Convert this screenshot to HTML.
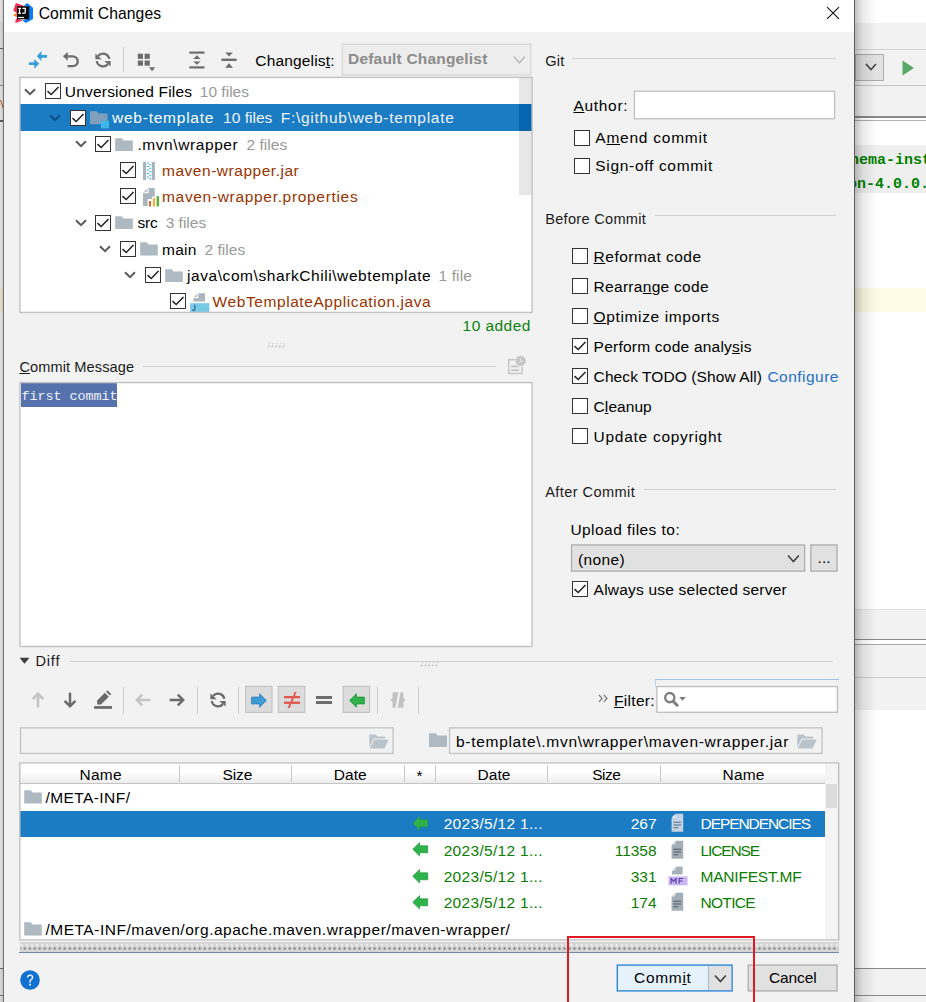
<!DOCTYPE html>
<html><head><meta charset="utf-8"><title>Commit Changes</title>
<style>
html,body{margin:0;padding:0;}
body{width:926px;height:1002px;overflow:hidden;position:relative;background:#fff;font-family:"Liberation Sans", sans-serif;font-size:16px;}
#root{position:absolute;left:0;top:0;width:926px;height:1002px;overflow:hidden;}
#root div, #root svg{position:absolute;}
u{text-decoration:underline;text-underline-offset:0.7px;text-decoration-thickness:1.3px;}
</style></head><body><div id="root">
<div style="left:855px;top:0px;width:71px;height:1002px;background:#ffffff;"></div>
<div style="left:855px;top:23px;width:71px;height:98px;background:#f2f2f2;"></div>
<div style="left:855px;top:49px;width:71px;height:1px;background:#d4d4d4;"></div>
<div style="left:855px;top:54px;width:29px;height:27px;background:#e1e1e1;border:1px solid #adadad;box-sizing:border-box;"></div>
<svg style="left:864px;top:61px" width="14" height="12" viewBox="0 0 14 12"><path d="M2 3 L7 8.5 L12 3" fill="none" stroke="#444" stroke-width="1.6"/></svg>
<svg style="left:902px;top:60px" width="13" height="16" viewBox="0 0 13 16"><path d="M0.5 0.5 L12 8 L0.5 15.5 Z" fill="#59a869"/></svg>
<div style="left:855px;top:85px;width:71px;height:1px;background:#c4c4c4;"></div>
<div style="left:855px;top:115.5px;width:71px;height:2px;background:#8a8a8a;"></div>
<div style="left:855px;top:117.5px;width:71px;height:2.5px;background:#ffffff;"></div>
<div style="left:855px;top:120px;width:71px;height:1px;background:#b0b0b0;"></div>
<div style="left:855px;top:121px;width:71px;height:24px;background:#ffffff;"></div>
<div style="left:855px;top:145px;width:71px;height:47.5px;background:#efefef;"></div>
<div style="left:850px;top:150.90px;height:20px;line-height:20px;font-size:15px;color:#008000;white-space:pre;font-family:'Liberation Mono', monospace;font-weight:700;">hema-inst</div>
<div style="left:847.9px;top:174.90px;height:20px;line-height:20px;font-size:15px;color:#008000;white-space:pre;font-family:'Liberation Mono', monospace;font-weight:700;">on-4.0.0.</div>
<div style="left:855px;top:288px;width:71px;height:24px;background:#fffae3;"></div>
<div style="left:855px;top:609px;width:71px;height:101px;background:#f2f2f2;"></div>
<div style="left:855px;top:609px;width:71px;height:1px;background:#e4e4e4;"></div>
<div style="left:855px;top:638.5px;width:71px;height:1.5px;background:#8a8a8a;"></div>
<div style="left:855px;top:640px;width:71px;height:4px;background:#ffffff;"></div>
<div style="left:855px;top:644px;width:71px;height:1px;background:#a8a8a8;"></div>
<div style="left:855px;top:677px;width:71px;height:1px;background:#cccccc;"></div>
<div style="left:855px;top:968px;width:71px;height:34px;background:#f2f2f2;"></div>
<div style="left:855px;top:968px;width:71px;height:1.3px;background:#8a8a8a;"></div>
<div style="left:855px;top:994.5px;width:71px;height:1.3px;background:#8a8a8a;"></div>
<div style="left:855px;top:0px;width:21px;height:1002px;background:linear-gradient(to right, rgba(0,0,0,0.24), rgba(0,0,0,0.09) 35%, rgba(0,0,0,0) 100%);"></div>
<div style="left:0px;top:0px;width:4px;height:1002px;background:#ffffff;"></div>
<div style="left:0px;top:22px;width:4px;height:99px;background:#f2f2f2;"></div>
<div style="left:0px;top:48px;width:4px;height:1.4px;background:#6a6a6a;"></div>
<div style="left:0px;top:85px;width:4px;height:1.4px;background:#9a9a9a;"></div>
<div style="left:0px;top:86.4px;width:4px;height:34px;background:#fafafa;"></div>
<svg style="left:0px;top:99px" width="4" height="10" viewBox="0 0 4 10"><path d="M0 1 L1 1 L3.8 9 L2.6 9 Z" fill="#c9682a"/></svg>
<div style="left:0px;top:120.4px;width:4px;height:1.5px;background:#6a6a6a;"></div>
<div style="left:0px;top:288px;width:4px;height:24px;background:#fffae3;"></div>
<div style="left:0px;top:968px;width:4px;height:34px;background:#f2f2f2;"></div>
<div style="left:0px;top:968px;width:4px;height:1.3px;background:#777;"></div>
<div style="left:0px;top:995px;width:4px;height:1.3px;background:#777;"></div>
<div style="left:0px;top:0px;width:3.4px;height:1002px;background:linear-gradient(to right, rgba(0,0,0,0.10), rgba(0,0,0,0.20));"></div>
<div style="left:3px;top:0px;width:852px;height:1002px;background:#f2f2f2;"></div>
<div style="left:3.1px;top:0px;width:1.1px;height:1002px;background:#737373;"></div>
<div style="left:854px;top:0px;width:1.3px;height:1002px;background:#5e5e5e;"></div>
<div style="left:4.3px;top:0px;width:849.7px;height:32px;background:#ffffff;"></div>
<svg style="left:12px;top:2px" width="22" height="22" viewBox="12 2 22 22">
<path d="M15.9 2.9 L23.9 5.8 L17.4 13.4 L13.3 10.4 Z" fill="#fe2857"/>
<path d="M13 15.2 L17.4 12.2 V17.6 Z" fill="#fc801d"/>
<path d="M15.9 18.6 L23 20.6 L15.2 22.9 Z" fill="#fe2857"/>
<path d="M27.2 2.9 L33 7.8 V19.1 L25.9 23 L22.4 20.6 L28.6 18.6 V7 L23.9 5.8 Z" fill="#087cfa"/>
<rect x="17" y="6.2" width="12.2" height="13.1" fill="#0a0a0a"/>
<rect x="18.1" y="16.9" width="5.9" height="1.1" fill="#fff"/>
<path d="M18.1 7.8 H21 V8.9 H20.2 V12.8 H21 V13.9 H18.1 V12.8 H18.9 V8.9 H18.1 Z M22.4 7.8 H25.9 V12 C25.9 13.3 25.1 14 23.9 14 C23 14 22.4 13.6 22 13.1 L22.8 12.3 C23.1 12.6 23.4 12.8 23.8 12.8 C24.3 12.8 24.6 12.5 24.6 11.9 V8.9 H22.4 Z" fill="#fff"/>
</svg>
<div style="left:38.7px;top:3.90px;height:20px;line-height:20px;font-size:15.7px;color:#000;white-space:pre;letter-spacing:0.094px;">Commit Changes</div>
<svg style="left:826px;top:6px" width="14" height="14" viewBox="0 0 14 14"><path d="M1.1 1.2 L13 12.8 M13 1.2 L1.1 12.8" stroke="#111" stroke-width="1.15" fill="none"/></svg>
<svg style="left:28px;top:50px" width="20" height="20" viewBox="0 0 20 20">
<g fill="#389fd6"><path d="M8.8 6.3 L13.5 1.1 V4.9 H19 V7.7 H13.5 V11.1 Z"/>
<path d="M11.2 13.7 L6.3 8.9 V12.3 H1 V15.1 H6.3 V18.7 Z"/></g></svg>
<svg style="left:62px;top:51px" width="18" height="18" viewBox="0 0 18 18">
<path d="M5.8 0.9 L0.9 5.3 L5.8 9.7 Z" fill="#6e6e6e"/>
<path d="M5.6 5.35 H10.8 A4.9 4.9 0 0 1 10.8 15.15 H5.6" fill="none" stroke="#6e6e6e" stroke-width="2.4"/></svg>
<svg style="left:93px;top:50.2px" width="20" height="20" viewBox="0 0 16 16"><g fill="none" stroke="#6e6e6e" stroke-width="1.85"><path d="M13 7.1 A5.1 5.1 0 0 0 4.1 4.7"/><path d="M3 8.9 A5.1 5.1 0 0 0 11.9 11.3"/></g><path d="M1.9 2.75 V7.3 H6.95 Z" fill="#6e6e6e"/><path d="M14.1 13.25 V8.7 H9.05 Z" fill="#6e6e6e"/></svg>
<div style="left:122.5px;top:47px;width:1px;height:24.5px;background:#cdcdcd;"></div>
<svg style="left:137px;top:53px" width="19" height="19" viewBox="0 0 19 19"><g fill="#6e6e6e">
<rect x="0.8" y="0.7" width="5.2" height="5.2"/><rect x="7.6" y="0.7" width="5.2" height="5.2"/>
<rect x="0.8" y="7.5" width="5.2" height="5.2"/><rect x="7.6" y="7.5" width="5.2" height="5.2"/>
<path d="M11.8 14.3 H18.3 L15.05 18.2 Z"/></g></svg>
<svg style="left:189px;top:51px" width="16" height="18" viewBox="0 0 16 18"><g fill="#6e6e6e">
<rect x="0.3" y="0.5" width="15.2" height="2.2"/><rect x="0.3" y="15.3" width="15.2" height="2.2"/>
<path d="M7.9 4.3 L11.6 8 H4.2 Z"/><path d="M7.9 13.8 L11.6 10.4 H4.2 Z"/></g></svg>
<svg style="left:221px;top:52px" width="16" height="17" viewBox="0 0 16 17"><g fill="#6e6e6e">
<rect x="0.4" y="6.6" width="15.2" height="2.4"/>
<path d="M8 4.6 L11.8 0.6 H4.2 Z"/><path d="M8 11.2 L12 15.8 H4 Z"/></g></svg>
<div style="left:255.3px;top:50.50px;height:20px;line-height:20px;font-size:15.5px;color:#000;white-space:pre;letter-spacing:0.159px;">Changelis<u>t</u>:</div>
<svg style="left:340px;top:42px" width="193" height="35" viewBox="340 42 193 35"><rect x="342.25" y="44.25" width="188.50" height="30.70" fill="#ededed" stroke="#d8d8d8" stroke-width="1.3"/></svg>
<div style="left:348.1px;top:49.10px;height:20px;line-height:20px;font-size:15.5px;color:#8c8c8c;white-space:pre;font-weight:700;letter-spacing:0.185px;">Default Changelist</div>
<svg style="left:513px;top:55px" width="13" height="10" viewBox="0 0 13 10"><path d="M1 1.8 L6.4 7.8 L11.8 1.8" fill="none" stroke="#b4b4b4" stroke-width="1.3"/></svg>
<div style="left:19px;top:77px;width:514px;height:236px;background:#ffffff;"></div>
<div style="left:20px;top:104.25px;width:512px;height:26.55px;background:#1b7cc4;"></div>
<div style="left:519px;top:78px;width:13px;height:117px;background:rgba(0,0,0,0.095);"></div>
<div style="left:519px;top:104.25px;width:13px;height:26.55px;background:#0766b0;"></div>
<svg style="left:24px;top:87.72px" width="12" height="8" viewBox="0 0 12 8"><path d="M1 1.2 L6 6.1 L11 1.2" fill="none" stroke="#5a5a5a" stroke-width="2"/></svg>
<div style="left:45px;top:83.0px;width:16px;height:16px;background:#ffffff;border:1px solid #333333;box-sizing:border-box;"></div>
<svg style="left:45px;top:83.0px" width="16" height="16" viewBox="0 0 16 16"><path d="M2.5 8.1 L6.2 11.5 L13.5 4" fill="none" stroke="#222" stroke-width="1.5"/></svg>
<div style="left:64.8px;top:81.72px;height:20px;line-height:20px;font-size:15.5px;color:#000;white-space:pre;letter-spacing:0.202px;">Unversioned Files</div>
<div style="left:199.8px;top:81.72px;height:20px;line-height:20px;font-size:15.5px;color:#999999;white-space:pre;letter-spacing:0.009px;">10 files</div>
<svg style="left:49.3px;top:113.97px" width="12" height="8" viewBox="0 0 12 8"><path d="M1 1.2 L6 6.1 L11 1.2" fill="none" stroke="#0d4f86" stroke-width="2"/></svg>
<div style="left:70px;top:109.5px;width:16px;height:16px;background:#ffffff;border:1px solid #333333;box-sizing:border-box;"></div>
<svg style="left:70px;top:109.5px" width="16" height="16" viewBox="0 0 16 16"><path d="M2.5 8.1 L6.2 11.5 L13.5 4" fill="none" stroke="#222" stroke-width="1.5"/></svg>
<svg style="left:90px;top:110.78px" width="20" height="18" viewBox="0 0 20 18"><path d="M0 0.3 H6.6 L8.6 2.4 H17.6 V13.2 H0 Z" fill="#7f9fbd"/><rect x="11" y="9.8" width="8" height="7.6" fill="#40b6e8"/></svg>
<div style="left:112px;top:107.97px;height:20px;line-height:20px;font-size:15.5px;color:#fff;white-space:pre;letter-spacing:0.763px;">web-template</div>
<div style="left:223px;top:107.97px;height:20px;line-height:20px;font-size:15.5px;color:#eef4fa;white-space:pre;letter-spacing:0.034px;">10 files</div>
<div style="left:280.7px;top:107.97px;height:20px;line-height:20px;font-size:15.5px;color:#eef4fa;white-space:pre;letter-spacing:0.738px;">F:\github\web-template</div>
<svg style="left:74.5px;top:140.22px" width="12" height="8" viewBox="0 0 12 8"><path d="M1 1.2 L6 6.1 L11 1.2" fill="none" stroke="#5a5a5a" stroke-width="2"/></svg>
<div style="left:95px;top:135.5px;width:16px;height:16px;background:#ffffff;border:1px solid #333333;box-sizing:border-box;"></div>
<svg style="left:95px;top:135.5px" width="16" height="16" viewBox="0 0 16 16"><path d="M2.5 8.1 L6.2 11.5 L13.5 4" fill="none" stroke="#222" stroke-width="1.5"/></svg>
<svg style="left:115.3px;top:137.82px" width="18" height="13.6" viewBox="0 0 17.5 13.5"><path d="M0 0.3 H6.4 L8.4 2.4 H17.5 V13.5 H0 Z" fill="#afb9c2"/></svg>
<div style="left:137.4px;top:135.22px;height:20px;line-height:20px;font-size:15.5px;color:#000;white-space:pre;letter-spacing:0.583px;">.mvn\wrapper</div>
<div style="left:246.5px;top:135.22px;height:20px;line-height:20px;font-size:15.5px;color:#999999;white-space:pre;letter-spacing:0.029px;">2 files</div>
<div style="left:120.2px;top:162.0px;width:16px;height:16px;background:#ffffff;border:1px solid #333333;box-sizing:border-box;"></div>
<svg style="left:120.2px;top:162.0px" width="16" height="16" viewBox="0 0 16 16"><path d="M2.5 8.1 L6.2 11.5 L13.5 4" fill="none" stroke="#222" stroke-width="1.5"/></svg>
<svg style="left:143px;top:161.97px" width="12" height="18" viewBox="0 0 12 18">
<rect x="0" y="0" width="3" height="18" fill="#a9b4bc"/><rect x="8.8" y="0" width="3.1" height="18" fill="#a9b4bc"/>
<path d="M3.8 0.40h2.3v1.2h-2.3zM5.9 2.15h2.3v1.2h-2.3zM3.8 3.90h2.3v1.2h-2.3zM5.9 5.65h2.3v1.2h-2.3zM3.8 7.40h2.3v1.2h-2.3zM5.9 9.15h2.3v1.2h-2.3zM3.8 10.90h2.3v1.2h-2.3zM5.9 12.65h2.3v1.2h-2.3zM3.8 14.40h2.3v1.2h-2.3zM5.9 16.15h2.3v1.2h-2.3z" fill="#40b6e0"/></svg>
<div style="left:162px;top:161.38px;height:20px;line-height:20px;font-size:15.5px;color:#993300;white-space:pre;letter-spacing:0.526px;">maven-wrapper.jar</div>
<div style="left:120.2px;top:188.0px;width:16px;height:16px;background:#ffffff;border:1px solid #333333;box-sizing:border-box;"></div>
<svg style="left:120.2px;top:188.0px" width="16" height="16" viewBox="0 0 16 16"><path d="M2.5 8.1 L6.2 11.5 L13.5 4" fill="none" stroke="#222" stroke-width="1.5"/></svg>
<svg style="left:143px;top:188.12px" width="17" height="19" viewBox="0 0 17 19">
<path d="M5.7 0 H11.7 V8.6 H9 V11 H4.6 V17.9 H0 V5.2 H5.7 Z" fill="#a9b4bc"/><path d="M4.7 0 V4.2 H0.2 Z" fill="#c5ccd2"/>
<rect x="6" y="13" width="2" height="5.5" fill="#f26522"/><rect x="9.9" y="10.1" width="2" height="8.4" fill="#f5a93b"/><rect x="13.5" y="8.1" width="2.6" height="10.4" fill="#62b543"/></svg>
<div style="left:162px;top:186.72px;height:20px;line-height:20px;font-size:15.5px;color:#993300;white-space:pre;letter-spacing:0.677px;">maven-wrapper.properties</div>
<svg style="left:74.5px;top:218.97px" width="12" height="8" viewBox="0 0 12 8"><path d="M1 1.2 L6 6.1 L11 1.2" fill="none" stroke="#5a5a5a" stroke-width="2"/></svg>
<div style="left:95px;top:214.5px;width:16px;height:16px;background:#ffffff;border:1px solid #333333;box-sizing:border-box;"></div>
<svg style="left:95px;top:214.5px" width="16" height="16" viewBox="0 0 16 16"><path d="M2.5 8.1 L6.2 11.5 L13.5 4" fill="none" stroke="#222" stroke-width="1.5"/></svg>
<svg style="left:115.3px;top:215.57px" width="18" height="13.6" viewBox="0 0 17.5 13.5"><path d="M0 0.3 H6.4 L8.4 2.4 H17.5 V13.5 H0 Z" fill="#afb9c2"/></svg>
<div style="left:137.4px;top:212.97px;height:20px;line-height:20px;font-size:15.5px;color:#000;white-space:pre;letter-spacing:-0.157px;">src</div>
<div style="left:165.7px;top:212.97px;height:20px;line-height:20px;font-size:15.5px;color:#999999;white-space:pre;">3 files</div>
<svg style="left:99.2px;top:245.22px" width="12" height="8" viewBox="0 0 12 8"><path d="M1 1.2 L6 6.1 L11 1.2" fill="none" stroke="#5a5a5a" stroke-width="2"/></svg>
<div style="left:120.2px;top:240.5px;width:16px;height:16px;background:#ffffff;border:1px solid #333333;box-sizing:border-box;"></div>
<svg style="left:120.2px;top:240.5px" width="16" height="16" viewBox="0 0 16 16"><path d="M2.5 8.1 L6.2 11.5 L13.5 4" fill="none" stroke="#222" stroke-width="1.5"/></svg>
<svg style="left:139.8px;top:242.12px" width="18" height="13.6" viewBox="0 0 17.5 13.5"><path d="M0 0.3 H6.4 L8.4 2.4 H17.5 V13.5 H0 Z" fill="#afb9c2"/></svg>
<div style="left:162px;top:239.53px;height:20px;line-height:20px;font-size:15.5px;color:#000;white-space:pre;letter-spacing:0.223px;">main</div>
<div style="left:204.5px;top:239.53px;height:20px;line-height:20px;font-size:15.5px;color:#999999;white-space:pre;letter-spacing:0.029px;">2 files</div>
<svg style="left:124.2px;top:271.48px" width="12" height="8" viewBox="0 0 12 8"><path d="M1 1.2 L6 6.1 L11 1.2" fill="none" stroke="#5a5a5a" stroke-width="2"/></svg>
<div style="left:144.7px;top:267.0px;width:16px;height:16px;background:#ffffff;border:1px solid #333333;box-sizing:border-box;"></div>
<svg style="left:144.7px;top:267.0px" width="16" height="16" viewBox="0 0 16 16"><path d="M2.5 8.1 L6.2 11.5 L13.5 4" fill="none" stroke="#222" stroke-width="1.5"/></svg>
<svg style="left:164.9px;top:268.88px" width="18" height="13.6" viewBox="0 0 17.5 13.5"><path d="M0 0.3 H6.4 L8.4 2.4 H17.5 V13.5 H0 Z" fill="#afb9c2"/></svg>
<div style="left:187px;top:266.28px;height:20px;line-height:20px;font-size:15.5px;color:#000;white-space:pre;letter-spacing:0.572px;">java\com\sharkChili\webtemplate</div>
<div style="left:438.5px;top:266.28px;height:20px;line-height:20px;font-size:15.5px;color:#999999;white-space:pre;letter-spacing:0.125px;">1 file</div>
<div style="left:169.5px;top:293.0px;width:16px;height:16px;background:#ffffff;border:1px solid #333333;box-sizing:border-box;"></div>
<svg style="left:169.5px;top:293.0px" width="16" height="16" viewBox="0 0 16 16"><path d="M2.5 8.1 L6.2 11.5 L13.5 4" fill="none" stroke="#222" stroke-width="1.5"/></svg>
<svg style="left:189.5px;top:292.52px" width="20" height="20" viewBox="0 0 20 20">
<path d="M8.4 0.2 H15 V8.6 H3.4 V5.2 H8.4 Z" fill="#a9b4bc"/><path d="M7.4 0.2 V4.2 H3.4 Z" fill="#c5ccd2"/>
<rect x="0.2" y="10.2" width="19.2" height="9.6" fill="#78c9e6"/>
<path d="M5.4 11.8 v4.2 c0 1.3 -0.7 1.9 -1.8 1.9 c-0.8 0 -1.3 -0.3 -1.7 -0.8 l0.8 -0.8 c0.3 0.3 0.5 0.5 0.9 0.5 c0.4 0 0.7 -0.3 0.7 -0.9 v-4.1 z" fill="#2a5d7c"/></svg>
<div style="left:212.6px;top:291.73px;height:20px;line-height:20px;font-size:15.5px;color:#993300;white-space:pre;letter-spacing:0.579px;">WebTemplateApplication.java</div>
<div style="left:462.6px;top:316.00px;height:20px;line-height:20px;font-size:15.5px;color:#0b800b;white-space:pre;letter-spacing:0.443px;">10 added</div>
<svg style="left:265.6px;top:341.6px" width="21" height="6" viewBox="0 0 21 6"><g><rect x="1.6" y="3.4" width="2" height="2" fill="#cbcbcb"/><rect x="2.8" y="0.8" width="1.8" height="1.6" fill="#d9d9d9"/><rect x="0.6" y="2.2" width="1.2" height="1.2" fill="#ffffff"/><rect x="5.3" y="3.4" width="2" height="2" fill="#cbcbcb"/><rect x="6.5" y="0.8" width="1.8" height="1.6" fill="#d9d9d9"/><rect x="4.3" y="2.2" width="1.2" height="1.2" fill="#ffffff"/><rect x="9.0" y="3.4" width="2" height="2" fill="#cbcbcb"/><rect x="10.2" y="0.8" width="1.8" height="1.6" fill="#d9d9d9"/><rect x="8.0" y="2.2" width="1.2" height="1.2" fill="#ffffff"/><rect x="12.7" y="3.4" width="2" height="2" fill="#cbcbcb"/><rect x="13.9" y="0.8" width="1.8" height="1.6" fill="#d9d9d9"/><rect x="11.7" y="2.2" width="1.2" height="1.2" fill="#ffffff"/><rect x="16.4" y="3.4" width="2" height="2" fill="#cbcbcb"/><rect x="17.6" y="0.8" width="1.8" height="1.6" fill="#d9d9d9"/><rect x="15.4" y="2.2" width="1.2" height="1.2" fill="#ffffff"/></g></svg>
<div style="left:19.4px;top:357.20px;height:20px;line-height:20px;font-size:14.6px;color:#1a1a1a;white-space:pre;letter-spacing:0.090px;"><u>C</u>ommit Message</div>
<div style="left:143px;top:366px;width:353px;height:1px;background:#d1d1d1;"></div>
<svg style="left:506px;top:354px" width="22" height="22" viewBox="0 0 22 22">
<rect x="2.7" y="5.7" width="13.4" height="13.8" fill="none" stroke="#c6c6c6" stroke-width="1.5"/>
<rect x="5" y="11.4" width="8.2" height="1.9" fill="#c6c6c6"/><rect x="5" y="15.2" width="8.2" height="1.9" fill="#c6c6c6"/>
<circle cx="14.6" cy="6.9" r="5.9" fill="#f2f2f2"/><circle cx="14.6" cy="6.9" r="5.2" fill="#c6c6c6"/>
<path d="M14.4 4 V7.2 H17.2" fill="none" stroke="#e4e4e4" stroke-width="1.1"/></svg>
<div style="left:19px;top:382px;width:514px;height:265px;background:#ffffff;"></div>
<div style="left:21.2px;top:383.2px;width:96.2px;height:23.6px;background:#5672ad;"></div>
<div style="left:21.4px;top:387.20px;height:20px;line-height:20px;font-size:13.4px;color:#eef1f8;white-space:pre;font-family:'Liberation Mono', monospace;letter-spacing:-0.036px;">first commit</div>
<div style="left:545.2px;top:51.40px;height:20px;line-height:20px;font-size:14.6px;color:#1a1a1a;white-space:pre;letter-spacing:0.181px;">Git</div>
<div style="left:572px;top:58px;width:264px;height:1px;background:#d1d1d1;"></div>
<div style="left:573.5px;top:96.00px;height:20px;line-height:20px;font-size:15.5px;color:#000;white-space:pre;letter-spacing:0.674px;"><u>A</u>uthor:</div>
<svg style="left:632px;top:89px" width="205" height="32" viewBox="632 89 205 32"><rect x="634.45" y="91.25" width="200.10" height="27.50" fill="#ffffff" stroke="#c0c0c0" stroke-width="1.3"/></svg>
<div style="left:574px;top:130.0px;width:16px;height:16px;background:#ffffff;border:1px solid #333333;box-sizing:border-box;"></div>
<div style="left:595.3px;top:128.20px;height:20px;line-height:20px;font-size:15.5px;color:#000;white-space:pre;letter-spacing:0.760px;">A<u>m</u>end commit</div>
<div style="left:574px;top:158.0px;width:16px;height:16px;background:#ffffff;border:1px solid #333333;box-sizing:border-box;"></div>
<div style="left:595.3px;top:156.40px;height:20px;line-height:20px;font-size:15.5px;color:#000;white-space:pre;letter-spacing:0.687px;">Si<u>g</u>n-off commit</div>
<div style="left:545.2px;top:208.60px;height:20px;line-height:20px;font-size:14.6px;color:#1a1a1a;white-space:pre;letter-spacing:0.282px;">Before Commit</div>
<div style="left:654.5px;top:215px;width:181.5px;height:1px;background:#d1d1d1;"></div>
<div style="left:572px;top:248.25px;width:16px;height:16px;background:#ffffff;border:1px solid #333333;box-sizing:border-box;"></div>
<div style="left:593.6px;top:246.60px;height:20px;line-height:20px;font-size:15.5px;color:#000;white-space:pre;letter-spacing:0.479px;"><u>R</u>eformat code</div>
<div style="left:572px;top:278.25px;width:16px;height:16px;background:#ffffff;border:1px solid #333333;box-sizing:border-box;"></div>
<div style="left:593.6px;top:276.60px;height:20px;line-height:20px;font-size:15.5px;color:#000;white-space:pre;letter-spacing:0.288px;">Rearra<u>n</u>ge code</div>
<div style="left:572px;top:308.25px;width:16px;height:16px;background:#ffffff;border:1px solid #333333;box-sizing:border-box;"></div>
<div style="left:593.6px;top:306.60px;height:20px;line-height:20px;font-size:15.5px;color:#000;white-space:pre;letter-spacing:0.626px;"><u>O</u>ptimize imports</div>
<div style="left:572px;top:338.25px;width:16px;height:16px;background:#ffffff;border:1px solid #333333;box-sizing:border-box;"></div>
<svg style="left:572px;top:338.25px" width="16" height="16" viewBox="0 0 16 16"><path d="M2.5 8.1 L6.2 11.5 L13.5 4" fill="none" stroke="#222" stroke-width="1.5"/></svg>
<div style="left:593.6px;top:336.60px;height:20px;line-height:20px;font-size:15.5px;color:#000;white-space:pre;letter-spacing:0.226px;">Perform code analy<u>s</u>is</div>
<div style="left:572px;top:368.25px;width:16px;height:16px;background:#ffffff;border:1px solid #333333;box-sizing:border-box;"></div>
<svg style="left:572px;top:368.25px" width="16" height="16" viewBox="0 0 16 16"><path d="M2.5 8.1 L6.2 11.5 L13.5 4" fill="none" stroke="#222" stroke-width="1.5"/></svg>
<div style="left:593.6px;top:366.60px;height:20px;line-height:20px;font-size:15.5px;color:#000;white-space:pre;letter-spacing:0.088px;">Check TODO (Show All)</div>
<div style="left:572px;top:398.25px;width:16px;height:16px;background:#ffffff;border:1px solid #333333;box-sizing:border-box;"></div>
<div style="left:593.6px;top:396.60px;height:20px;line-height:20px;font-size:15.5px;color:#000;white-space:pre;letter-spacing:0.064px;">C<u>l</u>eanup</div>
<div style="left:572px;top:428.25px;width:16px;height:16px;background:#ffffff;border:1px solid #333333;box-sizing:border-box;"></div>
<div style="left:593.6px;top:426.60px;height:20px;line-height:20px;font-size:15.5px;color:#000;white-space:pre;letter-spacing:0.720px;">Update copyright</div>
<div style="left:767.4px;top:366.60px;height:20px;line-height:20px;font-size:15.5px;color:#2470c4;white-space:pre;letter-spacing:0.487px;">Configure</div>
<div style="left:545.2px;top:482.40px;height:20px;line-height:20px;font-size:14.6px;color:#1a1a1a;white-space:pre;letter-spacing:0.405px;">After Commit</div>
<div style="left:643.5px;top:489px;width:192.5px;height:1px;background:#d1d1d1;"></div>
<div style="left:570.4px;top:520.00px;height:20px;line-height:20px;font-size:15.5px;color:#000;white-space:pre;letter-spacing:0.454px;">Upload files to:</div>
<svg style="left:569px;top:543px" width="238" height="30" viewBox="569 543 238 30"><rect x="571.55" y="544.95" width="233.10" height="26.20" fill="#e1e1e1" stroke="#adadad" stroke-width="1.3"/></svg>
<div style="left:578px;top:549.60px;height:20px;line-height:20px;font-size:15.5px;color:#000;white-space:pre;letter-spacing:0.365px;">(none)</div>
<svg style="left:787px;top:553.5px" width="13" height="10" viewBox="0 0 13 10"><path d="M1 1.6 L6.4 7.6 L11.8 1.6" fill="none" stroke="#3c3c3c" stroke-width="1.5"/></svg>
<svg style="left:809px;top:543px" width="30" height="30" viewBox="809 543 30 30"><rect x="810.85" y="544.95" width="26.20" height="26.20" fill="#e1e1e1" stroke="#adadad" stroke-width="1.3"/></svg>
<div style="left:817.6px;top:548.20px;height:20px;line-height:20px;font-size:15.5px;color:#000;white-space:pre;letter-spacing:0.026px;">...</div>
<div style="left:572px;top:581.25px;width:16px;height:16px;background:#ffffff;border:1px solid #333333;box-sizing:border-box;"></div>
<svg style="left:572px;top:581.25px" width="16" height="16" viewBox="0 0 16 16"><path d="M2.5 8.1 L6.2 11.5 L13.5 4" fill="none" stroke="#222" stroke-width="1.5"/></svg>
<div style="left:593.6px;top:579.60px;height:20px;line-height:20px;font-size:15.5px;color:#000;white-space:pre;letter-spacing:0.211px;">Always use selected server</div>
<svg style="left:19px;top:657px" width="11" height="8" viewBox="0 0 11 8"><path d="M0.6 0.8 H10.4 L5.5 6.8 Z" fill="#3c3c3c"/></svg>
<div style="left:35.5px;top:651.00px;height:20px;line-height:20px;font-size:14.6px;color:#1a1a1a;white-space:pre;letter-spacing:0.790px;">Diff</div>
<div style="left:70px;top:661px;width:763px;height:1px;background:#d1d1d1;"></div>
<svg style="left:418.8px;top:661.4px" width="21" height="6" viewBox="0 0 21 6"><g><rect x="1.6" y="3.4" width="2" height="2" fill="#cbcbcb"/><rect x="2.8" y="0.8" width="1.8" height="1.6" fill="#d9d9d9"/><rect x="0.6" y="2.2" width="1.2" height="1.2" fill="#ffffff"/><rect x="5.3" y="3.4" width="2" height="2" fill="#cbcbcb"/><rect x="6.5" y="0.8" width="1.8" height="1.6" fill="#d9d9d9"/><rect x="4.3" y="2.2" width="1.2" height="1.2" fill="#ffffff"/><rect x="9.0" y="3.4" width="2" height="2" fill="#cbcbcb"/><rect x="10.2" y="0.8" width="1.8" height="1.6" fill="#d9d9d9"/><rect x="8.0" y="2.2" width="1.2" height="1.2" fill="#ffffff"/><rect x="12.7" y="3.4" width="2" height="2" fill="#cbcbcb"/><rect x="13.9" y="0.8" width="1.8" height="1.6" fill="#d9d9d9"/><rect x="11.7" y="2.2" width="1.2" height="1.2" fill="#ffffff"/><rect x="16.4" y="3.4" width="2" height="2" fill="#cbcbcb"/><rect x="17.6" y="0.8" width="1.8" height="1.6" fill="#d9d9d9"/><rect x="15.4" y="2.2" width="1.2" height="1.2" fill="#ffffff"/></g></svg>
<svg style="left:29px;top:691.2px" width="18" height="18" viewBox="-9 -9 18 18"><g transform="rotate(0)" fill="none" stroke="#c3c3c3" stroke-width="2.5"><path d="M0 7.4 V-5.4"/><path d="M-5.4 -0.8 L0 -6.2 L5.4 -0.8"/></g></svg>
<svg style="left:61px;top:691.2px" width="18" height="18" viewBox="-9 -9 18 18"><g transform="rotate(180)" fill="none" stroke="#6a6a6a" stroke-width="2.5"><path d="M0 7.4 V-5.4"/><path d="M-5.4 -0.8 L0 -6.2 L5.4 -0.8"/></g></svg>
<svg style="left:93px;top:690px" width="20" height="20" viewBox="0 0 20 20"><g fill="#6a6a6a">
<rect x="1.1" y="16.1" width="17.9" height="2.7"/>
<path d="M4.1 14.5 V10.6 L11.9 2.8 L15.8 6.7 L8 14.5 Z"/><path d="M13 1.7 L14.4 0.3 L18.3 4.2 L16.9 5.6 Z"/></g></svg>
<div style="left:123px;top:687px;width:1px;height:27px;background:#cdcdcd;"></div>
<svg style="left:134.3px;top:691.2px" width="18" height="18" viewBox="-9 -9 18 18"><g transform="rotate(270)" fill="none" stroke="#c3c3c3" stroke-width="2.5"><path d="M0 7.4 V-5.4"/><path d="M-5.4 -0.8 L0 -6.2 L5.4 -0.8"/></g></svg>
<svg style="left:168.3px;top:691.2px" width="18" height="18" viewBox="-9 -9 18 18"><g transform="rotate(90)" fill="none" stroke="#6a6a6a" stroke-width="2.5"><path d="M0 7.4 V-5.4"/><path d="M-5.4 -0.8 L0 -6.2 L5.4 -0.8"/></g></svg>
<div style="left:197px;top:687px;width:1px;height:27px;background:#cdcdcd;"></div>
<svg style="left:208px;top:689.6px" width="20" height="20" viewBox="0 0 16 16"><g fill="none" stroke="#6a6a6a" stroke-width="1.85"><path d="M13 7.1 A5.1 5.1 0 0 0 4.1 4.7"/><path d="M3 8.9 A5.1 5.1 0 0 0 11.9 11.3"/></g><path d="M1.9 2.75 V7.3 H6.95 Z" fill="#6a6a6a"/><path d="M14.1 13.25 V8.7 H9.05 Z" fill="#6a6a6a"/></svg>
<div style="left:238px;top:687px;width:1px;height:27px;background:#cdcdcd;"></div>
<svg style="left:244px;top:684px" width="30" height="30" viewBox="244 684 30 30"><rect x="245.60" y="686.40" width="26.40" height="26.00" fill="#dcdcdc" stroke="#c4c4c4" stroke-width="1.2"/></svg>
<svg style="left:276px;top:684px" width="31" height="30" viewBox="276 684 31 30"><rect x="278.40" y="686.40" width="26.40" height="26.00" fill="#dcdcdc" stroke="#c4c4c4" stroke-width="1.2"/></svg>
<svg style="left:341px;top:684px" width="31" height="30" viewBox="341 684 31 30"><rect x="343.20" y="686.40" width="26.40" height="26.00" fill="#dcdcdc" stroke="#c4c4c4" stroke-width="1.2"/></svg>
<svg style="left:251px;top:692.8px" width="16" height="15" viewBox="0 0 16 14.4"><path d="M0.6 3.8 H8.6 V0.5 L15.4 7.2 L8.6 13.9 V10.6 H0.6 Z" fill="#3d9bd4" stroke="#2f7fb3" stroke-width="0.8"/></svg>
<svg style="left:349px;top:692.8px" width="16" height="15" viewBox="0 0 16 14.4"><path d="M0.6 3.8 H8.6 V0.5 L15.4 7.2 L8.6 13.9 V10.6 H0.6 Z" transform="translate(16,0) scale(-1,1)" fill="#2fb24c" stroke="#25963d" stroke-width="0.8"/></svg>
<svg style="left:283px;top:691px" width="18" height="18" viewBox="0 0 18 18"><g fill="#e1574b">
<rect x="1" y="5" width="16" height="2.3"/><rect x="1" y="10.6" width="16" height="2.3"/>
<path d="M11.6 1 H13.6 L6.6 17 H4.6 Z"/></g></svg>
<div style="left:316.1px;top:695.8px;width:15.8px;height:2.9px;background:#6e6e6e;"></div>
<div style="left:316.1px;top:701.1px;width:15.8px;height:2.9px;background:#6e6e6e;"></div>
<div style="left:377.3px;top:687px;width:1px;height:27px;background:#cdcdcd;"></div>
<svg style="left:389.6px;top:691.6px" width="16" height="16" viewBox="0 0 16 16"><g fill="#c2c2c2">
<path d="M2.6 0.2 H8.4 L5.4 15.8 H2.6 V10 L0.2 8 L2.6 6 Z"/><path d="M13.4 15.8 H7.6 L10.6 0.2 H13.4 V6 L15.8 8 L13.4 10 Z"/></g></svg>
<div style="left:418px;top:687px;width:1px;height:27px;background:#cdcdcd;"></div>
<svg style="left:598px;top:694px" width="11" height="9" viewBox="0 0 11 9"><path d="M1 1 L4.2 4.4 L1 7.8 M5.8 1 L9 4.4 L5.8 7.8" fill="none" stroke="#707070" stroke-width="1.1"/></svg>
<div style="left:614px;top:691.00px;height:20px;line-height:20px;font-size:15.5px;color:#000;white-space:pre;letter-spacing:0.307px;"><u>F</u>ilter:</div>
<div style="left:654.7px;top:679px;width:184px;height:1px;background:#9cc3e6;"></div>
<div style="left:654.7px;top:679px;width:1px;height:8px;background:#b9d4ec;"></div>
<svg style="left:655px;top:684px" width="185" height="30" viewBox="655 684 185 30"><rect x="656.95" y="686.55" width="180.50" height="25.70" fill="#ffffff" stroke="#bdbdbd" stroke-width="1.3"/></svg>
<svg style="left:663px;top:691px" width="24" height="17" viewBox="0 0 24 17">
<circle cx="6.8" cy="6.6" r="4.6" fill="none" stroke="#808080" stroke-width="2.4"/><path d="M10 10 L15 15.2" stroke="#808080" stroke-width="3"/>
<path d="M16.2 6 H22.8 L19.5 9.8 Z" fill="#7d7d7d"/></svg>
<svg style="left:18px;top:726px" width="377" height="30" viewBox="18 726 377 30"><rect x="20.55" y="727.85" width="372.50" height="25.60" fill="#f2f2f2" stroke="#c2c2c2" stroke-width="1.3"/></svg>
<svg style="left:368.6px;top:734px" width="20" height="15" viewBox="0 0 20 15"><path d="M0.3 0.4 H6.6 L8.4 2.4 H16.2 V4.6 H4.6 L0.3 13.4 Z" fill="#b9c3cc"/><path d="M5.2 5.6 H19.8 L15.4 14.6 H0.8 Z" fill="#b9c3cc"/></svg>
<svg style="left:429.2px;top:733.40px" width="18.2" height="14" viewBox="0 0 17.5 13.5"><path d="M0 0.3 H6.4 L8.4 2.4 H17.5 V13.5 H0 Z" fill="#afb9c2"/></svg>
<svg style="left:447px;top:726px" width="377" height="30" viewBox="447 726 377 30"><rect x="449.55" y="727.85" width="372.50" height="25.60" fill="#f2f2f2" stroke="#c2c2c2" stroke-width="1.3"/></svg>
<div style="left:456px;top:731.50px;height:20px;line-height:20px;font-size:15.5px;color:#000;white-space:pre;letter-spacing:0.705px;">b-template\.mvn\wrapper\maven-wrapper.jar</div>
<svg style="left:797.4px;top:734px" width="20" height="15" viewBox="0 0 20 15"><path d="M0.3 0.4 H6.6 L8.4 2.4 H16.2 V4.6 H4.6 L0.3 13.4 Z" fill="#b9c3cc"/><path d="M5.2 5.6 H19.8 L15.4 14.6 H0.8 Z" fill="#b9c3cc"/></svg>
<div style="left:19px;top:762px;width:820px;height:179px;background:#ffffff;"></div>
<div style="left:20px;top:763.2px;width:805px;height:20px;background:linear-gradient(#ffffff,#ffffff 45%,#ececec);"></div>
<div style="left:20px;top:783px;width:805px;height:1px;background:#c4c4c4;"></div>
<div style="left:825px;top:763.6px;width:13px;height:176.4px;background:#f4f4f4;"></div>
<div style="left:825.6px;top:784px;width:11px;height:24.4px;background:#dbdbdb;"></div>
<div style="left:179.3px;top:765px;width:1px;height:17px;background:#c6c6c6;"></div>
<div style="left:291.4px;top:765px;width:1px;height:17px;background:#c6c6c6;"></div>
<div style="left:404.4px;top:765px;width:1px;height:17px;background:#c6c6c6;"></div>
<div style="left:435.4px;top:765px;width:1px;height:17px;background:#c6c6c6;"></div>
<div style="left:547.4px;top:765px;width:1px;height:17px;background:#c6c6c6;"></div>
<div style="left:660.4px;top:765px;width:1px;height:17px;background:#c6c6c6;"></div>
<div style="left:79.4px;top:764.80px;height:20px;line-height:20px;font-size:15.5px;color:#000;white-space:pre;letter-spacing:0.310px;">Name</div>
<div style="left:222.4px;top:764.80px;height:20px;line-height:20px;font-size:15.5px;color:#000;white-space:pre;letter-spacing:-0.089px;">Size</div>
<div style="left:333.7px;top:764.80px;height:20px;line-height:20px;font-size:15.5px;color:#000;white-space:pre;letter-spacing:0.088px;">Date</div>
<div style="left:416.6px;top:766.30px;height:20px;line-height:20px;font-size:15.5px;color:#000;white-space:pre;">*</div>
<div style="left:477.4px;top:764.80px;height:20px;line-height:20px;font-size:15.5px;color:#000;white-space:pre;letter-spacing:0.113px;">Date</div>
<div style="left:592.3px;top:764.80px;height:20px;line-height:20px;font-size:15.5px;color:#000;white-space:pre;letter-spacing:-0.564px;">Size</div>
<div style="left:722.6px;top:764.80px;height:20px;line-height:20px;font-size:15.5px;color:#000;white-space:pre;letter-spacing:0.135px;">Name</div>
<svg style="left:24px;top:790.40px" width="18" height="13.6" viewBox="0 0 17.5 13.5"><path d="M0 0.3 H6.4 L8.4 2.4 H17.5 V13.5 H0 Z" fill="#afb9c2"/></svg>
<div style="left:45.4px;top:787.50px;height:20px;line-height:20px;font-size:15.5px;color:#000;white-space:pre;letter-spacing:0.434px;">/META-INF/</div>
<div style="left:20px;top:810.7px;width:805px;height:25.9px;background:#1b7cc4;"></div>
<svg style="left:412.4px;top:816.15px" width="16.5" height="14.6" viewBox="0 0 16 14.4"><path d="M0.6 3.8 H8.6 V0.5 L15.4 7.2 L8.6 13.9 V10.6 H0.6 Z" transform="translate(16,0) scale(-1,1)" fill="#2fb24c" stroke="#27993f" stroke-width="0.7"/></svg>
<div style="left:443.7px;top:814.35px;height:20px;line-height:20px;font-size:15.5px;color:#ffffff;white-space:pre;letter-spacing:0.306px;">2023/5/12 1...</div>
<div style="right:269.4px;top:814.35px;height:20px;line-height:20px;font-size:15.5px;color:#ffffff;white-space:pre;">267</div>
<svg style="left:671px;top:813.35px" width="12.6" height="19.4" viewBox="0 0 13 19.4">
<path d="M5.4 0.4 H12.6 V19 H0.6 V5.2 Z" fill="#c3d3e3"/><path d="M4.6 0.4 L0.6 4.4 H4.6 Z" fill="#e6eef6"/>
<g fill="#6d8298"><rect x="2.6" y="8.6" width="7.8" height="1.3"/><rect x="2.6" y="11.4" width="7.8" height="1.3"/><rect x="2.6" y="14.2" width="5" height="1.3"/></g></svg>
<div style="left:700.5px;top:814.35px;height:20px;line-height:20px;font-size:15.5px;color:#ffffff;white-space:pre;letter-spacing:-1.068px;">DEPENDENCIES</div>
<svg style="left:412.4px;top:842.40px" width="16.5" height="14.6" viewBox="0 0 16 14.4"><path d="M0.6 3.8 H8.6 V0.5 L15.4 7.2 L8.6 13.9 V10.6 H0.6 Z" transform="translate(16,0) scale(-1,1)" fill="#2fb24c" stroke="#27993f" stroke-width="0.7"/></svg>
<div style="left:443.7px;top:840.60px;height:20px;line-height:20px;font-size:15.5px;color:#0a7d00;white-space:pre;letter-spacing:0.306px;">2023/5/12 1...</div>
<div style="right:269.4px;top:840.60px;height:20px;line-height:20px;font-size:15.5px;color:#0a7d00;white-space:pre;">11358</div>
<svg style="left:671px;top:839.60px" width="12.6" height="19.4" viewBox="0 0 13 19.4">
<path d="M5.4 0.4 H12.6 V19 H0.6 V5.2 Z" fill="#a4aeb6"/><path d="M4.6 0.4 L0.6 4.4 H4.6 Z" fill="#d5dbe0"/>
<g fill="#5f6b74"><rect x="2.6" y="8.6" width="7.8" height="1.3"/><rect x="2.6" y="11.4" width="7.8" height="1.3"/><rect x="2.6" y="14.2" width="5" height="1.3"/></g></svg>
<div style="left:700.5px;top:840.60px;height:20px;line-height:20px;font-size:15.5px;color:#0a7d00;white-space:pre;letter-spacing:-1.135px;">LICENSE</div>
<svg style="left:412.4px;top:868.65px" width="16.5" height="14.6" viewBox="0 0 16 14.4"><path d="M0.6 3.8 H8.6 V0.5 L15.4 7.2 L8.6 13.9 V10.6 H0.6 Z" transform="translate(16,0) scale(-1,1)" fill="#2fb24c" stroke="#27993f" stroke-width="0.7"/></svg>
<div style="left:443.7px;top:866.85px;height:20px;line-height:20px;font-size:15.5px;color:#0a7d00;white-space:pre;letter-spacing:0.306px;">2023/5/12 1...</div>
<div style="right:269.4px;top:866.85px;height:20px;line-height:20px;font-size:15.5px;color:#0a7d00;white-space:pre;">331</div>
<svg style="left:667.6px;top:866.05px" width="20" height="20" viewBox="0 0 20 20">
<path d="M8.6 0.6 H14.6 V8.6 H4 V5.2 Z" fill="#a7b1b9"/><path d="M7.8 0.6 L4 4.4 H7.8 Z" fill="#d5dbe0"/>
<rect x="0.5" y="10.4" width="19" height="9" fill="#c9b5f1"/>
<path d="M2.6 17.8 V12 H3.8 L5.6 14.8 L7.4 12 H8.6 V17.8 H7.5 V13.9 L5.6 16.6 L3.7 13.9 V17.8 Z M10.6 17.8 V12 H15 V13 H11.7 V14.5 H14.6 V15.5 H11.7 V17.8 Z" fill="#5b3fa8"/></svg>
<div style="left:700.5px;top:866.85px;height:20px;line-height:20px;font-size:15.5px;color:#0a7d00;white-space:pre;letter-spacing:-0.204px;">MANIFEST.MF</div>
<svg style="left:412.4px;top:894.90px" width="16.5" height="14.6" viewBox="0 0 16 14.4"><path d="M0.6 3.8 H8.6 V0.5 L15.4 7.2 L8.6 13.9 V10.6 H0.6 Z" transform="translate(16,0) scale(-1,1)" fill="#2fb24c" stroke="#27993f" stroke-width="0.7"/></svg>
<div style="left:443.7px;top:893.10px;height:20px;line-height:20px;font-size:15.5px;color:#0a7d00;white-space:pre;letter-spacing:0.306px;">2023/5/12 1...</div>
<div style="right:269.4px;top:893.10px;height:20px;line-height:20px;font-size:15.5px;color:#0a7d00;white-space:pre;">174</div>
<svg style="left:671px;top:892.10px" width="12.6" height="19.4" viewBox="0 0 13 19.4">
<path d="M5.4 0.4 H12.6 V19 H0.6 V5.2 Z" fill="#a4aeb6"/><path d="M4.6 0.4 L0.6 4.4 H4.6 Z" fill="#d5dbe0"/>
<g fill="#5f6b74"><rect x="2.6" y="8.6" width="7.8" height="1.3"/><rect x="2.6" y="11.4" width="7.8" height="1.3"/><rect x="2.6" y="14.2" width="5" height="1.3"/></g></svg>
<div style="left:700.5px;top:893.10px;height:20px;line-height:20px;font-size:15.5px;color:#0a7d00;white-space:pre;letter-spacing:-0.694px;">NOTICE</div>
<svg style="left:24px;top:922.20px" width="18" height="13.6" viewBox="0 0 17.5 13.5"><path d="M0 0.3 H6.4 L8.4 2.4 H17.5 V13.5 H0 Z" fill="#afb9c2"/></svg>
<div style="left:45.4px;top:919.50px;height:20px;line-height:20px;font-size:15.5px;color:#000;white-space:pre;letter-spacing:0.519px;">/META-INF/maven/org.apache.maven.wrapper/maven-wrapper/</div>
<div style="left:20px;top:942.2px;width:818.6px;height:9.6px;background:#d6d6d6;"></div>
<svg style="left:20px;top:942.2px" width="818.6" height="9.6" viewBox="0 0 818.6 9.6"><defs><pattern id="dp" width="5" height="9.6" patternUnits="userSpaceOnUse">
<rect x="0.9" y="2.2" width="1.5" height="1.5" fill="#ffffff"/><rect x="2.2" y="3.5" width="1.2" height="1.2" fill="#ececec"/>
<rect x="3.6" y="5.5" width="1.9" height="1.9" fill="#6b6b6b"/><rect x="-1.4" y="5.5" width="1.9" height="1.9" fill="#6b6b6b"/></pattern></defs>
<rect width="818.6" height="9.6" fill="url(#dp)"/></svg>
<div style="left:19px;top:951.8px;width:820px;height:1.4px;background:#6f89a3;"></div>
<svg style="left:20px;top:969.6px" width="20" height="20" viewBox="0 0 20 20"><circle cx="10" cy="10" r="9.8" fill="#1071d1"/>
<path d="M6.9 7.6 C6.9 5.6 8.3 4.5 10.1 4.5 C12 4.5 13.3 5.6 13.3 7.3 C13.3 8.6 12.6 9.3 11.7 10 C11 10.6 10.7 11 10.7 12 V12.4 H9.3 V11.8 C9.3 10.6 9.8 10 10.6 9.3 C11.3 8.7 11.8 8.2 11.8 7.4 C11.8 6.4 11.1 5.8 10.1 5.8 C9 5.8 8.4 6.5 8.3 7.6 Z M9.2 13.8 H10.9 V15.6 H9.2 Z" fill="#fff"/></svg>
<svg style="left:615px;top:963px" width="119" height="30" viewBox="615 963 119 30"><rect x="617.30" y="965.10" width="114.80" height="25.80" fill="#e5f1fb" stroke="#2f86d9" stroke-width="1.4"/></svg>
<div style="left:708px;top:966px;width:23px;height:24px;background:#e1e1e1;"></div>
<div style="left:707.6px;top:966px;width:1px;height:24px;background:#a8b8c8;"></div>
<div style="left:634px;top:968.40px;height:20px;line-height:20px;font-size:15.5px;color:#000;white-space:pre;letter-spacing:0.685px;">Comm<u>i</u>t</div>
<svg style="left:714px;top:973.5px" width="13" height="10" viewBox="0 0 13 10"><path d="M1 1.6 L6.4 7.6 L11.8 1.6" fill="none" stroke="#3c3c3c" stroke-width="1.5"/></svg>
<svg style="left:746px;top:963px" width="93" height="30" viewBox="746 963 93 30"><rect x="748.25" y="965.05" width="88.80" height="25.90" fill="#e1e1e1" stroke="#adadad" stroke-width="1.3"/></svg>
<div style="left:769px;top:968.40px;height:20px;line-height:20px;font-size:15.5px;color:#000;white-space:pre;letter-spacing:-0.108px;">Cancel</div>
<svg style="left:0;top:0" width="926" height="1002" viewBox="0 0 926 1002"><g fill="none" stroke="#c1c1c1" stroke-width="1.4">
<rect x="19.9" y="77.4" width="512.2" height="235"/>
<rect x="19.9" y="382.6" width="512.2" height="263.9"/>
<rect x="19.8" y="762.9" width="818.9" height="177"/>
</g></svg>
<div style="left:567px;top:935.6px;width:187.6px;height:80px;border:2px solid #e01b24;box-sizing:border-box;"></div>
</div></body></html>
